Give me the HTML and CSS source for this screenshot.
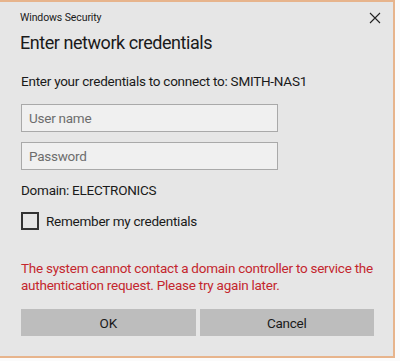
FILE: index.html
```html
<!DOCTYPE html>
<html lang="en">
<head>
  <meta charset="UTF-8">
  <title>Windows Security</title>
  <link rel="stylesheet" href="styles.css">
</head>
<body>
  <div class="dialog">
    <div class="titlebar">
      <span class="caption">Windows Security</span>
      <svg class="close" width="12" height="12" viewBox="0 0 12 12">
        <path d="M1 1 L11 11 M11 1 L1 11" stroke="#222" stroke-width="1.1" fill="none"/>
      </svg>
    </div>
    <h1>Enter network credentials</h1>
    <p class="prompt">Enter your credentials to connect to: SMITH-NAS1</p>
    <div class="field"><span class="placeholder">User name</span></div>
    <div class="field"><span class="placeholder">Password</span></div>
    <p class="domain">Domain: ELECTRONICS</p>
    <label class="remember"><span class="box"></span>Remember my credentials</label>
    <p class="error">The system cannot contact a domain controller to service the authentication request. Please try again later.</p>
    <div class="buttons">
      <button class="btn">OK</button>
      <button class="btn">Cancel</button>
    </div>
  </div>
</body>
</html>
```

FILE: styles.css
```css
body {
  margin: 0;
  background-color: #fbfbfb;
  font-family: Roboto, "Noto Sans", sans-serif;
  color: #1a1a1a;
  letter-spacing: -0.25px;
}
.dialog {
  width: 372px;
  height: 338px;
  padding: 8px 0 8px 21px;
  margin: 0;
  background-color: #e6e6e6;
  border-top: 2px solid #e7b48c;
  border-right: 2px solid #e7b48c;
  border-bottom: 2px solid #e7b48c;
  box-sizing: content-box;
}
.titlebar {
  display: flex;
  justify-content: space-between;
  align-items: center;
  height: 14px;
  padding-right: 12px;
}
.caption {
  font-size: 10.5px;
  margin-left: -1px;
  letter-spacing: -0.1px;
}
.close {
  margin-top: 2px;
}
h1 {
  font-size: 18px;
  font-weight: normal;
  margin: 6px 0 0 -1px;
  line-height: 26px;
  letter-spacing: -0.45px;
}
.prompt {
  font-size: 13.5px;
  margin: 15px 0 0 0;
  line-height: 20px;
}
.field {
  width: 255px;
  height: 26px;
  border: 1px solid #a9a9a9;
  background-color: #f0f0f0;
  margin-top: 13px;
  display: flex;
  align-items: center;
}
.field + .field {
  margin-top: 10px;
}
.placeholder {
  font-size: 13.5px;
  color: #6d6d6d;
  margin-left: 7px;
}
.domain {
  font-size: 13.5px;
  margin: 10px 0 0 0;
  line-height: 20px;
}
.remember {
  display: flex;
  align-items: center;
  font-size: 13.5px;
  margin-top: 10px;
  height: 22px;
}
.box {
  width: 14px;
  height: 14px;
  border: 2px solid #333;
  margin-right: 7px;
}
.error {
  font-size: 13.5px;
  color: #c4262e;
  margin: 28px 0 0 0;
  line-height: 17px;
  width: 360px;
}
.buttons {
  display: flex;
  gap: 4px;
  margin-top: 15px;
  width: 353px;
}
.btn {
  flex: 1;
  height: 27px;
  border: none;
  background-color: #bdbdbd;
  font-family: Roboto, "Noto Sans", sans-serif;
  font-size: 13.5px;
  letter-spacing: -0.25px;
  color: #1a1a1a;
}
```
